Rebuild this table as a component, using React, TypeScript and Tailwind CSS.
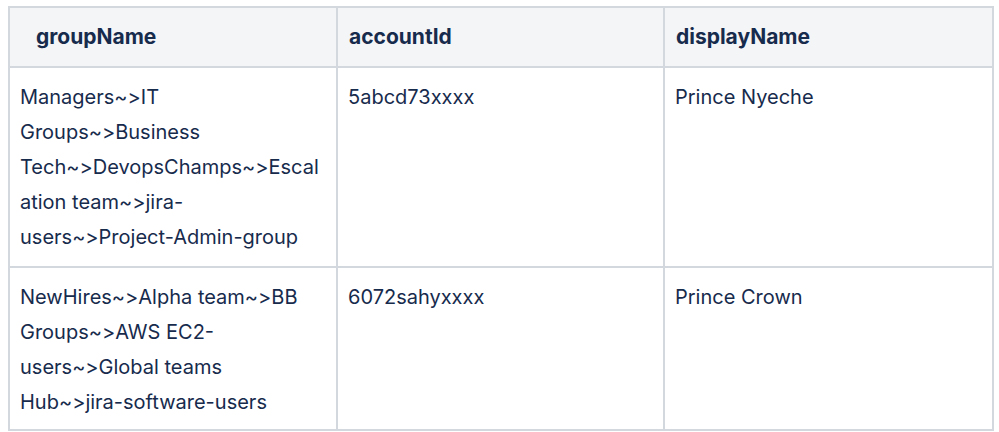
import React from "react";

const font = { fontFamily: "Inter, 'Noto Sans', sans-serif" };

export default function App() {
  const rows = [
    {
      h: "h-[200px]",
      g: ["Managers~>IT", "Groups~>Business", "Tech~>DevopsChamps~>Escal", "ation team~>jira-", "users~>Project-Admin-group"],
      a: "5abcd73xxxx",
      d: "Prince Nyeche",
    },
    {
      h: "h-[163px]",
      g: ["NewHires~>Alpha team~>BB", "Groups~>AWS EC2-", "users~>Global teams", "Hub~>jira-software-users"],
      a: "6072sahyxxxx",
      d: "Prince Crown",
    },
  ];
  const cell = "border-2 border-[#d3d7de] align-top pl-[10px] pr-2 pt-[12px] pb-0 leading-[35px]";
  return (
    <div className="w-[999px] h-[432px] bg-white pt-[6px] pl-[8px] overflow-hidden" style={font}>
      <table className="table-fixed border-collapse w-[984px] text-[#172b4d] text-[20px]">
        <colgroup>
          <col className="w-[328px]" />
          <col className="w-[327px]" />
          <col className="w-[329px]" />
        </colgroup>
        <thead>
          <tr className="bg-[#f4f5f7] h-[60px] text-[21px]">
            <th className="border-2 border-[#d3d7de] text-left font-bold pl-[26px] pr-3 align-middle">groupName</th>
            <th className="border-2 border-[#d3d7de] text-left font-bold pl-[11px] pr-3 align-middle">accountId</th>
            <th className="border-2 border-[#d3d7de] text-left font-bold pl-[11px] pr-3 align-middle">displayName</th>
          </tr>
        </thead>
        <tbody>
          {rows.map((r, i) => (
            <tr key={i} className={r.h}>
              <td className={cell + " whitespace-nowrap"}>
                {r.g.map((l, j) => (
                  <div key={j}>{l}</div>
                ))}
              </td>
              <td className={cell}>{r.a}</td>
              <td className={cell}>{r.d}</td>
            </tr>
          ))}
        </tbody>
      </table>
    </div>
  );
}
